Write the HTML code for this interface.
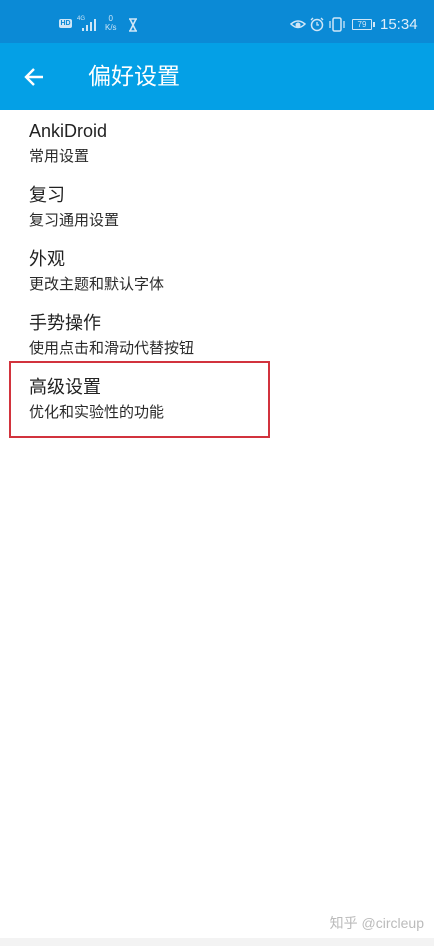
<!DOCTYPE html>
<html><head><meta charset="utf-8"><style>
*{margin:0;padding:0;box-sizing:border-box}
body{width:434px;height:946px;overflow:hidden;background:#fff;font-family:"Liberation Sans","Noto Sans CJK SC",sans-serif;position:relative}
.sb{position:absolute;left:0;top:0;width:434px;height:43px;background:#0b8ad6;color:#cfe6f7}
.tb{position:absolute;left:0;top:43px;width:434px;height:67px;background:#04a0e6;color:#fff}
.tb .t{position:absolute;left:88px;top:18px;font-size:23px;line-height:30px}
.it{position:absolute;left:29px;color:#222}
.it .a{font-size:18px;line-height:22px}
.it .b{font-size:15px;line-height:20px;margin-top:5px;color:#2a2a2a}
.box{position:absolute;left:9px;top:361px;width:261px;height:77px;border:2.5px solid #d2333d}
.wm{position:absolute;right:10px;top:913px;font-size:14px;color:#bbb}
.bot{position:absolute;left:0;top:938px;width:434px;height:8px;background:#f3f3f3}
</style></head><body>
<div class="sb">
 <div style="position:absolute;left:59px;top:19px;width:13px;height:9px;background:#cfe6f7;border-radius:2px;font-size:7px;color:#0b8ad6;text-align:center;line-height:9px;font-weight:bold">HD</div>
 <div style="position:absolute;left:77px;top:16px;font-size:6px">4G</div>
 <svg style="position:absolute;left:82px;top:18px" width="16" height="14"><rect x="0" y="10" width="2" height="3" fill="#cfe6f7"/><rect x="4" y="7" width="2" height="6" fill="#cfe6f7"/><rect x="8" y="4" width="2" height="9" fill="#cfe6f7"/><rect x="12" y="1" width="2" height="12" fill="#cfe6f7"/></svg>
 <div style="position:absolute;left:105px;top:14px;font-size:8px;line-height:9px;text-align:center">0<br>K/s</div>
 <svg style="position:absolute;left:128px;top:18px" width="10" height="14"><path d="M1 1H9M1 13H9M2 1L8 13M8 1L2 13" stroke="#cfe6f7" stroke-width="1.6" fill="none"/></svg>
 <svg style="position:absolute;left:290px;top:18px" width="16" height="14"><path d="M1 6Q8 0 15 6Q8 13 1 6Z" stroke="#cfe6f7" stroke-width="1.5" fill="none"/><circle cx="8" cy="7" r="2.5" fill="#cfe6f7"/></svg>
 <svg style="position:absolute;left:310px;top:17px" width="14" height="15"><circle cx="7" cy="8" r="5.5" stroke="#cfe6f7" stroke-width="1.5" fill="none"/><path d="M7 5V8H9M1 3L3 1M13 3L11 1" stroke="#cfe6f7" stroke-width="1.3" fill="none"/></svg>
 <svg style="position:absolute;left:328px;top:17px" width="18" height="15"><rect x="5" y="1" width="8" height="13" rx="1.5" stroke="#cfe6f7" stroke-width="1.5" fill="none"/><path d="M2 4V11M16 4V11" stroke="#cfe6f7" stroke-width="1.3"/></svg>
 <div style="position:absolute;left:352px;top:19px;width:20px;height:11px;border:1px solid #cfe6f7;font-size:8px;line-height:9px;text-align:center;border-radius:1px">79</div>
 <div style="position:absolute;left:373px;top:22px;width:2px;height:5px;background:#cfe6f7"></div>
 <div style="position:absolute;left:380px;top:16px;font-size:15px;color:#e0eefa">15:34</div>
</div>
<div class="tb">
 <svg style="position:absolute;left:23px;top:24px" width="22" height="20"><path d="M20 10H3M11 2L3 10L11 18" stroke="#fff" stroke-width="2.4" fill="none"/></svg>
 <div class="t">偏好设置</div>
</div>
<div class="it" style="top:120px"><div class="a">AnkiDroid</div><div class="b">常用设置</div></div>
<div class="it" style="top:184px"><div class="a">复习</div><div class="b">复习通用设置</div></div>
<div class="it" style="top:248px"><div class="a">外观</div><div class="b">更改主题和默认字体</div></div>
<div class="it" style="top:312px"><div class="a">手势操作</div><div class="b">使用点击和滑动代替按钮</div></div>
<div class="it" style="top:376px"><div class="a">高级设置</div><div class="b">优化和实验性的功能</div></div>
<div class="box"></div>
<div class="wm">知乎 @circleup</div>
<div class="bot"></div>
</body></html>
